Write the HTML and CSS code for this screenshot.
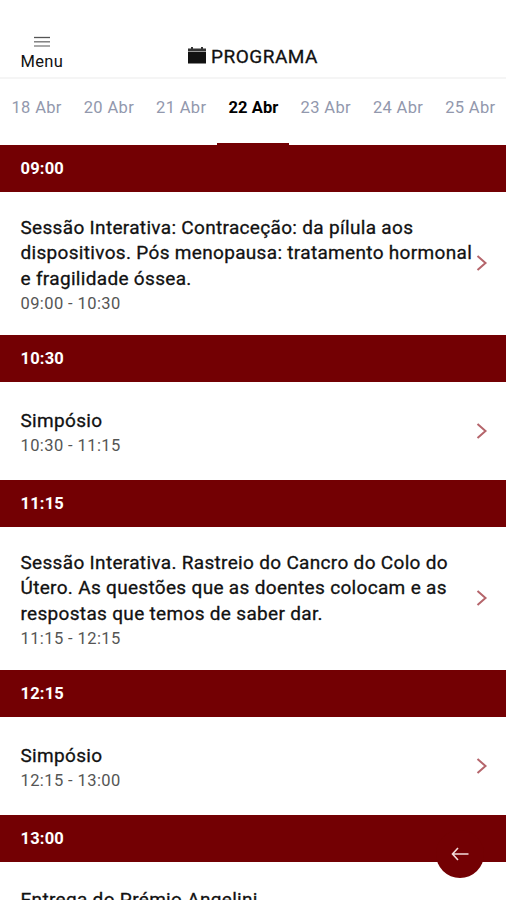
FILE: index.html
```html
<!DOCTYPE html>
<html lang="pt">
<head>
<meta charset="UTF-8" />
<meta name="viewport" content="width=device-width, initial-scale=1" />
<title>Programa</title>
<link rel="stylesheet" href="styles.css">
</head>
<body>
  <header class="topbar">
    <div class="menu">
      <svg class="menu-icon" viewBox="0 0 16 12" width="16" height="12">
        <path d="M0 1.5h16" stroke="#555" stroke-width="1.3" />
        <path d="M0 5.8h16" stroke="#777" stroke-width="1.4" />
        <path d="M0 10h16" stroke="#aaa" stroke-width="2" />
      </svg>
      <span>Menu</span>
    </div>
    <h1 class="title">
      <svg viewBox="0 0 18 18" width="18" height="18">
        <path d="M0 1.500h3V0h2v1.500h8V0h2v1.500h3v3H0z" fill="#333" />
        <path d="M0 5h18v11.500H0z" fill="#111" />
      </svg>
      <span>PROGRAMA</span>
    </h1>
  </header>

  <nav class="days">
    <a class="day"><span>18 Abr</span></a>
    <a class="day"><span>20 Abr</span></a>
    <a class="day"><span>21 Abr</span></a>
    <a class="day active"><span>22 Abr</span></a>
    <a class="day"><span>23 Abr</span></a>
    <a class="day"><span>24 Abr</span></a>
    <a class="day"><span>25 Abr</span></a>
  </nav>

  <main>
    <h2 class="hour"><span>09:00</span></h2>
    <div class="session">
      <div class="info">
        <p class="name">Sessão Interativa: Contraceção: da pílula aos<br>dispositivos. Pós menopausa: tratamento hormonal<br>e fragilidade óssea.</p>
        <p class="time">09:00 - 10:30</p>
      </div>
      <svg class="chevron" viewBox="0 0 12 18" width="12" height="18"><path d="M1.500 2l8 7-8 7" /></svg>
    </div>

    <h2 class="hour"><span>10:30</span></h2>
    <div class="session">
      <div class="info">
        <p class="name">Simpósio</p>
        <p class="time">10:30 - 11:15</p>
      </div>
      <svg class="chevron" viewBox="0 0 12 18" width="12" height="18"><path d="M1.500 2l8 7-8 7" /></svg>
    </div>

    <h2 class="hour"><span>11:15</span></h2>
    <div class="session">
      <div class="info">
        <p class="name">Sessão Interativa. Rastreio do Cancro do Colo do<br>Útero. As questões que as doentes colocam e as<br>respostas que temos de saber dar.</p>
        <p class="time">11:15 - 12:15</p>
      </div>
      <svg class="chevron" viewBox="0 0 12 18" width="12" height="18"><path d="M1.500 2l8 7-8 7" /></svg>
    </div>

    <h2 class="hour"><span>12:15</span></h2>
    <div class="session">
      <div class="info">
        <p class="name">Simpósio</p>
        <p class="time">12:15 - 13:00</p>
      </div>
      <svg class="chevron" viewBox="0 0 12 18" width="12" height="18"><path d="M1.500 2l8 7-8 7" /></svg>
    </div>

    <h2 class="hour"><span>13:00</span></h2>
    <div class="session last">
      <div class="info">
        <p class="name">Entrega do Prémio Angelini</p>
      </div>
    </div>
  </main>

  <button class="back" aria-label="Voltar">
    <svg viewBox="0 0 18 14" width="18" height="14"><path d="M17.500 7H1.500M7 1L1.500 7L7 13" /></svg>
  </button>
</body>
</html>
```
FILE: styles.css
```css
* {
  box-sizing: border-box;
}
body {
  margin: 0;
  height: 900px;
  overflow: hidden;
  background: #fff;
  color: #111;
  font-family: Roboto, sans-serif;
}
h1, h2, p {
  margin: 0;
}

.topbar {
  display: grid;
  grid-template-columns: 1fr auto 1fr;
  height: 79px;
  padding: 36px 20px 0;
  border-bottom: 2px solid #f5f5f5;
}
.menu {
  display: flex;
  flex-direction: column;
  align-items: center;
  justify-self: start;
  padding-left: 0.5px;
  font-size: 16.5px;
  line-height: 20px;
  letter-spacing: 0.3px;
}
.menu-icon {
  margin-bottom: 4px;
}
.title {
  display: flex;
  gap: 5px;
  height: 40px;
  align-items: center;
  font-size: 19px;
  font-weight: 400;
  letter-spacing: 0.5px;
  -webkit-text-stroke: 0.3px #111;
}

.days {
  display: grid;
  grid-template-columns: repeat(7, 1fr);
  height: 65.500px;
}
.day {
  padding: 19px 0 0 1px;
  text-align: center;
  color: #9298ad;
  font-size: 16.5px;
  line-height: 20px;
  letter-spacing: 0.35px;
}
.day.active {
  color: #000;
  font-weight: 700;
  letter-spacing: 0.1px;
  border-bottom: 2px solid #730003;
}

.hour {
  display: flex;
  align-items: center;
  height: 47px;
  padding-left: 20.5px;
  background: #730003;
  color: #fff;
  font-size: 16.5px;
  font-weight: 700;
  letter-spacing: 0.2px;
}
.session {
  display: flex;
  align-items: center;
  min-height: 97.600px;
  padding: 21px 18px 21px 20.5px;
}
.session.last {
  align-items: flex-start;
  height: 97.600px;
  padding-top: 23px;
}
.info {
  flex: 1;
  padding-top: 2.2px;
  margin-bottom: -2.3px;
  white-space: nowrap;
}
.name {
  font-size: 19px;
  line-height: 25.700px;
  letter-spacing: 0.32px;
  -webkit-text-stroke: 0.3px #111;
}
.time {
  color: #555;
  font-size: 16.5px;
  line-height: 24.500px;
  letter-spacing: 0.4px;
}
.chevron {
  flex: none;
  fill: none;
  stroke: #b5656b;
  stroke-width: 2;
}

/* floating back button */
.back {
  position: fixed;
  right: 22px;
  bottom: 22px;
  width: 48px;
  height: 48px;
  display: flex;
  align-items: center;
  justify-content: center;
  padding: 0;
  border: none;
  border-radius: 50%;
  background: #730003;
}
.back svg {
  fill: none;
  stroke: #f3dcdc;
  stroke-width: 1.6;
}
```
